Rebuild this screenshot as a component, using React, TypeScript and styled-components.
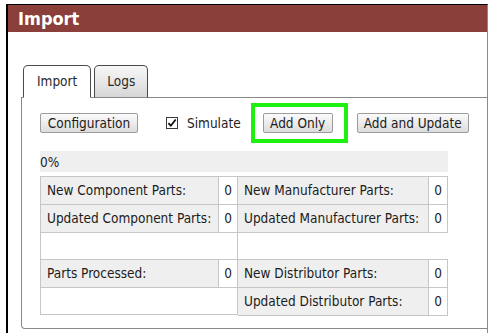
import styled, { createGlobalStyle } from "styled-components";

const GlobalStyle = createGlobalStyle`
  html, body {
    margin: 0;
    padding: 0;
    background: #ffffff;
  }
  body {
    font-family: "DejaVu Sans Condensed", "DejaVu Sans", sans-serif;
    font-size: 13.5px;
    color: #1c1c1c;
  }
`;

const Window = styled.div`
  margin: 4px 0 0 6px;
  width: 479px;
  height: 340px;
  border-top: 1px solid #000;
  border-left: 2px solid #000;
  border-right: 1px solid #8a8a8a;
`;

const Header = styled.div`
  height: 27px;
  background: #8a3f3a;
  color: #fff;
  font-weight: bold;
  font-size: 18px;
  line-height: 28px;
  padding-left: 10px;
`;

const Body = styled.div`
  padding: 33px 0 0 13px;
`;

const TabList = styled.div`
  display: flex;
  gap: 3px;
  padding-left: 2px;
  position: relative;
  z-index: 1;
`;

const Tab = styled.div<{ $active?: boolean }>`
  height: 33px;
  box-sizing: border-box;
  padding: 0 ${(p) => (p.$active ? "13px" : "12px")};
  border: 1px solid #4a4a4a;
  border-bottom: ${(p) => (p.$active ? "1px solid #fff" : "1px solid #888")};
  border-radius: 5px 5px 0 0;
  background: ${(p) =>
    p.$active ? "#fff" : "linear-gradient(#f7f7f7 0%, #e6e6e6 55%, #d6d6d6 100%)"};
  color: #2a2a2a;
  line-height: 31px;
  margin-bottom: -1px;
`;

const Panel = styled.div`
  border: 1px solid #888;
  border-right: none;
  border-bottom-left-radius: 4px;
  padding: 5px 0 12px 18px;
`;

const Toolbar = styled.div`
  display: flex;
  align-items: center;
  height: 40px;
  margin-bottom: 8px;
`;

const Button = styled.button<{ $w: number }>`
  width: ${(p) => p.$w}px;
  height: 20px;
  box-sizing: border-box;
  padding: 0;
  font-family: inherit;
  font-size: 13.5px;
  color: #1c1c1c;
  background: linear-gradient(#fbfbfb, #e9e9e9 60%, #dcdcdc);
  border: 1px solid #9c9c9c;
  border-radius: 2px;
  line-height: 18px;
  white-space: nowrap;
`;

const CheckLabel = styled.label`
  display: flex;
  align-items: center;
  gap: 9px;
  margin-left: 28px;
`;

const CheckBox = styled.span`
  width: 12px;
  height: 12px;
  box-sizing: border-box;
  border: 1px solid #3a3a3a;
  background: #fff;
  display: flex;
  align-items: center;
  justify-content: center;
`;

const Highlight = styled.div`
  margin-left: 10px;
  width: 97px;
  height: 40px;
  box-sizing: border-box;
  border: 4px solid #1ef00f;
  display: flex;
  align-items: center;
  padding-left: 8px;
`;

const Spacer = styled.div<{ $w: number }>`
  width: ${(p) => p.$w}px;
`;

const Progress = styled.div`
  width: 408px;
  height: 21px;
  background: #efefef;
  line-height: 22px;
  margin-bottom: 4px;
`;

const Stats = styled.div`
  display: flex;
  width: 408px;
`;

const StatTable = styled.div<{ $cols: string; $edge?: boolean }>`
  display: grid;
  grid-template-columns: ${(p) => p.$cols};
  border-top: 1px solid #c6c6c6;
  border-left: ${(p) => (p.$edge ? "1px solid #c6c6c6" : "none")};
  align-self: flex-start;
`;

const Cell = styled.div<{ $value?: boolean; $span?: boolean; $h?: number }>`
  height: ${(p) => p.$h ?? 27}px;
  line-height: ${(p) => p.$h ?? 27}px;
  border-right: 1px solid #c6c6c6;
  border-bottom: 1px solid #c6c6c6;
  background: ${(p) => (p.$value || p.$span ? "#fff" : "#efefef")};
  padding-left: ${(p) => (p.$value ? 0 : 6)}px;
  text-align: ${(p) => (p.$value ? "center" : "left")};
  grid-column: ${(p) => (p.$span ? "1 / span 2" : "auto")};
  white-space: nowrap;
  overflow: hidden;
`;

const RightColumn = styled.div`
  display: flex;
  flex-direction: column;
`;

const Gap = styled.div`
  height: 26px;
`;

function Check() {
  return (
    <svg width="11" height="10" viewBox="0 0 11 10">
      <path d="M1.5 5.2 L4.2 8 L9.6 1.2" fill="none" stroke="#111" strokeWidth="2" />
    </svg>
  );
}

export default function App() {
  return (
    <>
      <GlobalStyle />
      <Window>
        <Header>Import</Header>
        <Body>
          <TabList>
            <Tab $active>Import</Tab>
            <Tab>Logs</Tab>
          </TabList>
          <Panel>
            <Toolbar>
              <Button $w={98}>Configuration</Button>
              <CheckLabel>
                <CheckBox>
                  <Check />
                </CheckBox>
                Simulate
              </CheckLabel>
              <Highlight>
                <Button $w={70}>Add Only</Button>
              </Highlight>
              <Spacer $w={9} />
              <Button $w={112}>Add and Update</Button>
            </Toolbar>
            <Progress>0%</Progress>
            <Stats>
              <StatTable $cols="178px 19px" $edge>
                <Cell>New Component Parts:</Cell>
                <Cell $value>0</Cell>
                <Cell>Updated Component Parts:</Cell>
                <Cell $value>0</Cell>
                <Cell $span $h={26} />
                <Cell>Parts Processed:</Cell>
                <Cell $value>0</Cell>
                <Cell $span $h={26} />
              </StatTable>
              <RightColumn>
                <StatTable $cols="191px 19px">
                  <Cell>New Manufacturer Parts:</Cell>
                  <Cell $value>0</Cell>
                  <Cell>Updated Manufacturer Parts:</Cell>
                  <Cell $value>0</Cell>
                </StatTable>
                <Gap />
                <StatTable $cols="191px 19px">
                  <Cell>New Distributor Parts:</Cell>
                  <Cell $value>0</Cell>
                  <Cell>Updated Distributor Parts:</Cell>
                  <Cell $value>0</Cell>
                </StatTable>
              </RightColumn>
            </Stats>
          </Panel>
        </Body>
      </Window>
    </>
  );
}
